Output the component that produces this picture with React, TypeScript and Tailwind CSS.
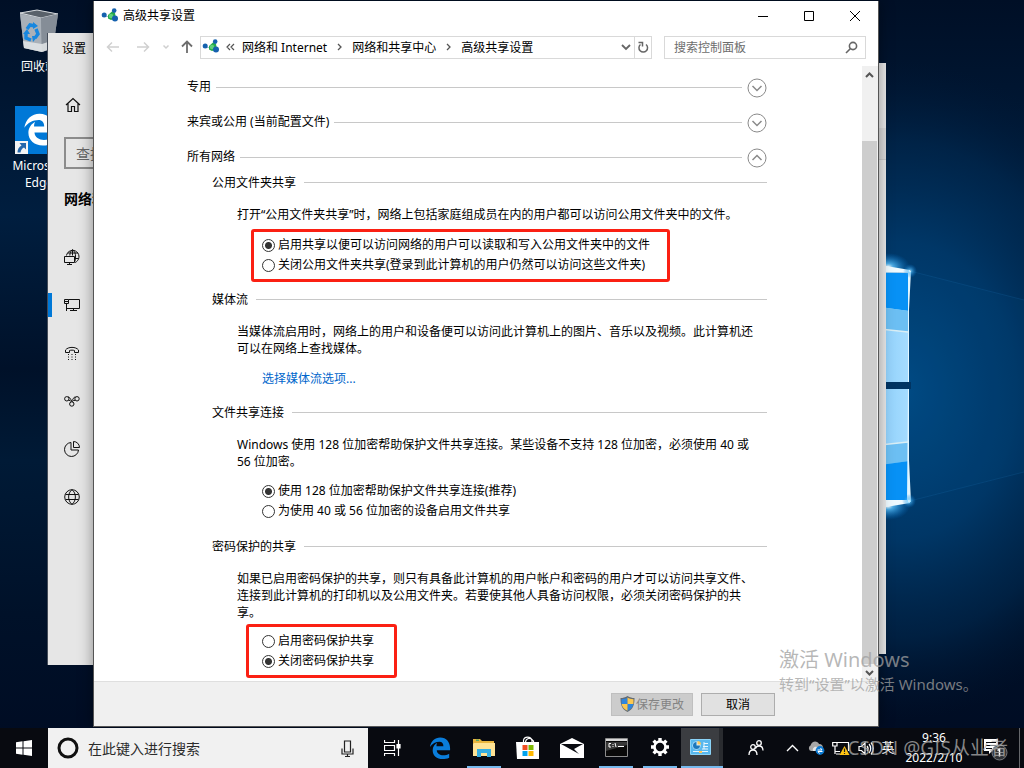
import React from "react";

type KidsProps = { children: React.ReactNode };

function Wallpaper() {
  return (
    <svg className="absolute inset-0 h-full w-full" viewBox="0 0 1024 768" preserveAspectRatio="none" aria-hidden="true">
      <defs>
        <linearGradient id="base" x1="0" y1="0" x2="0" y2="1">
          <stop offset="0" stopColor="#000f26" />
          <stop offset="0.28" stopColor="#001e3f" />
          <stop offset="0.48" stopColor="#001129" />
          <stop offset="0.6" stopColor="#001a36" />
          <stop offset="0.8" stopColor="#001129" />
          <stop offset="1" stopColor="#000b22" />
        </linearGradient>
        <radialGradient id="halo" cx="0.5" cy="0.5" r="0.5">
          <stop offset="0" stopColor="#004a84" />
          <stop offset="0.45" stopColor="#003a6c" stopOpacity="0.9" />
          <stop offset="0.75" stopColor="#002a52" stopOpacity="0.6" />
          <stop offset="1" stopColor="#001836" stopOpacity="0" />
        </radialGradient>
        <radialGradient id="flare" cx="0.5" cy="0.5" r="0.5">
          <stop offset="0" stopColor="#ffffff" />
          <stop offset="0.25" stopColor="#5cc4ff" stopOpacity="0.8" />
          <stop offset="1" stopColor="#0078d7" stopOpacity="0" />
        </radialGradient>
        <linearGradient id="pane" x1="0" y1="0" x2="1" y2="0">
          <stop offset="0" stopColor="#8fd0fb" />
          <stop offset="1" stopColor="#a5dcff" />
        </linearGradient>
      </defs>
      <rect width="1024" height="768" fill="url(#base)" />
      <ellipse cx="900" cy="390" rx="260" ry="330" fill="url(#halo)" />
      <path d="M910 271 1024 300V472L910 501Z" fill="#00508f" opacity="0.12" />
      <path d="M910 271 1024 300M910 501 1024 472" stroke="#1b75b5" strokeWidth="1" opacity="0.2" />
      <ellipse cx="888" cy="267" rx="22" ry="14" fill="url(#flare)" />
      <ellipse cx="888" cy="506" rx="22" ry="14" fill="url(#flare)" />
      <path d="M880 272 909 273V382H880Z" fill="url(#pane)" />
      <path d="M880 273 909 273V311L880 307Z" fill="#0791f5" />
      <path d="M880 307 909 311V332L880 329Z" fill="#6cbff3" />
      <path d="M880 329 908 332" stroke="#d9eef5" strokeWidth="1.500" />
      <path d="M880 389H909V501H880Z" fill="url(#pane)" />
      <path d="M880 445 909 442V461L880 465Z" fill="#6cbff3" />
      <path d="M880 465 909 461V501H880Z" fill="#0791f5" />
      <path d="M880 445 908 442" stroke="#d9eef5" strokeWidth="1.500" />
      <path d="M880 265 910 270V273L880 272Z" fill="#effaff" />
      <path d="M880 500H910V503L880 508Z" fill="#effaff" />
      <path d="M908 271H911L909 310V382H908ZM908 389H909V460L911 502H907Z" fill="#e2f6ff" />
      <path d="M880 382H911V389H880Z" fill="#003462" />
      <circle cx="910" cy="271" r="7" fill="url(#flare)" opacity="0.8" />
      <circle cx="909" cy="501" r="7" fill="url(#flare)" opacity="0.8" />
    </svg>
  );
}

function NetworkGlyph() {
  return (
    <svg width="18" height="16" viewBox="0 0 18 16" className="shrink-0" aria-hidden="true">
      <path d="M3 8 10 9 13 3M10 9 14 12" stroke="#aac3cf" strokeWidth="1" fill="none" />
      <path d="M11.500 3 7 7 7 10.500 10 12 15 10.500 14 5Z" fill="#25a94c" />
      <circle cx="10" cy="8" r="2.200" fill="#5ed07a" />
      <circle cx="3.200" cy="7" r="2.500" fill="#1561ae" />
      <circle cx="13.200" cy="2.600" r="2.300" fill="#1561ae" />
      <circle cx="14" cy="10.500" r="3" fill="#1561ae" />
    </svg>
  );
}

function RecycleBin() {
  return (
    <svg width="48" height="48" viewBox="0 0 48 48" aria-hidden="true">
      <path d="M5 6 22 3 43 7 38 41 27 45 9 41Z" fill="#8b939c" />
      <path d="M5 6 22 3 43 7 26 11Z" fill="#59616a" stroke="#d5d9dd" strokeWidth="1" />
      <path d="M5 7 26 11 27 45 9 41Z" fill="#a9b0b8" />
      <path d="M26 11 43 7 38 41 27 45Z" fill="#858d97" />
      <path d="M8 34 27 37 39 33 38 41 27 45 9 41Z" fill="#e3e6e8" opacity="0.85" />
      <g fill="none" stroke="#1787e0" strokeWidth="3.400">
        <path d="M12 22 15 18 20 19" />
        <path d="M21 22 23 27 20 31" />
        <path d="M16 33 11 31 11 26" />
      </g>
      <path d="M18 15 23 19 18 22ZM23 29 18 35 17 29ZM8 27 12 22 15 27Z" fill="#1787e0" />
    </svg>
  );
}

const edgePath =
  "M1 11C2 4.500 6.500.5 12.200.5 19 .5 23 5.500 23 12.200V14.500H8.500C8.700 18 12 20 15.500 20 18 20 20 19.300 22 18.200V22.500C19.700 23.600 17.300 24 14.800 24 8.500 24 4 20.200 4 14.600 4 10.800 6.200 8 9 6.400 8.300 7.500 8.200 9 8.200 10H15.700C15.700 7 14.200 5.200 11.500 5.200 7.500 5.200 3.500 7.200 1 11Z";

function DesktopIcon({ children, label }: KidsProps & { label: string }) {
  return (
    <button type="button" className="flex w-[76px] flex-col items-center gap-[3px] text-center text-[12px] leading-[17px] text-white">
      {children}
      <span>{label}</span>
    </button>
  );
}

function DesktopIcons() {
  return (
    <nav aria-label="桌面" className="absolute top-[7px] left-px flex flex-col gap-[31px]">
      <DesktopIcon label="回收站">
        <RecycleBin />
      </DesktopIcon>
      <DesktopIcon label="Microsoft Edge">
        <svg width="48" height="48" viewBox="0 0 48 48" aria-hidden="true">
          <rect width="48" height="48" fill="#0078d7" />
          <g transform="translate(8 7) scale(1.35)">
            <path d={edgePath} fill="#fff" />
          </g>
          <rect x="0" y="35" width="13" height="13" fill="#f4f4f4" />
          <path d="M4.500 37H11V43.500L9 41.500C7 42.500 6 44 5.500 46.500H2.500C2.500 43 4 41 6.500 39.500Z" fill="#2467ab" />
        </svg>
      </DesktopIcon>
    </nav>
  );
}

function SettingsIcon({ name }: { name: string }) {
  return (
    <svg width="16" height="16" viewBox="0 0 16 16" fill="none" stroke="#111" strokeWidth="1" aria-hidden="true">
      {name === "状态" && (
        <>
          <path d="M2.500 6.500A6.300 6.300 0 1 1 11 13.500M8.500.7C6.500 2 6 4 5.800 6.500M8.500.7C11 2.500 11.500 5 11.500 7 11.500 9 11.300 10.500 11 12M3.500 4H14M11 9.500H14.500M8.500.7V6.500" />
          <path d="M.5 7.500H10.500V13.500H.5ZM5.500 13.500V15.500M3 15.500H8" />
        </>
      )}
      {name === "以太网" && (
        <path d="M4.500 2.500H15.500V11.500H2.500M9.500 11.500V13.500M6 13.500H13M.5 2.500H4.500V6.500H.5ZM2.500 6.500V14M.5 4.500H4.500" />
      )}
      {name === "拨号" && (
        <>
          <path d="M1.500 7.500V5C4 1.500 12 1.500 14.500 5V7.500H10.500V5.500C9 5 7 5 5.500 5.500V7.500Z" />
          <path d="M4 9.500H5M7.500 9.500H8.500M11 9.500H12M4 12H5M7.500 12H8.500M11 12H12M4 14.500H5M7.500 14.500H8.500M11 14.500H12" />
        </>
      )}
      {name === "VPN" && (
        <>
          <circle cx="2.800" cy="5.800" r="2.200" />
          <circle cx="13" cy="5.800" r="2.200" />
          <circle cx="7.800" cy="11" r="2.200" />
          <path d="M4 4C6 3.500 6.500 7.500 9.500 9.500M11.500 4C9.500 3.500 9 7.500 6.200 9.500M4.500 7.300 6.500 7.600M11.200 7.300 9.200 7.600" />
        </>
      )}
      {name === "数据使用量" && (
        <path d="M7 1.500A7 7 0 1 0 14.500 9H7ZM9.500.5V6.500H15.500A6 6 0 0 0 9.500.5Z" />
      )}
      {name === "代理" && (
        <>
          <circle cx="8" cy="8" r="7.300" />
          <path d="M8 .7C3.500 4 3.500 12 8 15.300M8 .7C12.500 4 12.500 12 8 15.300M1.500 5.500H14.500M1.500 10.500H14.500" />
        </>
      )}
    </svg>
  );
}

const settingsPages = ["状态", "以太网", "拨号", "VPN", "数据使用量", "代理"];

function SettingsWindow() {
  return (
    <section aria-label="设置" className="absolute top-[33px] bottom-[63px] left-[47px] w-[400px] overflow-hidden border-l border-[#444c58] bg-[#e6e6e6]">
      <h2 className="flex h-8 items-center pl-[14px] text-[12px]">设置</h2>
      <button type="button" aria-label="主页" className="mt-4 flex h-12 w-full items-center pl-[17px]">
        <svg width="16" height="16" viewBox="0 0 16 16" fill="none" stroke="#111" strokeWidth="1.200" aria-hidden="true">
          <path d="M1 8 8 1.500 15 8M3 6.500V14.500H6.500V9.500H9.500V14.500H13V6.500" />
        </svg>
      </button>
      <input aria-label="查找设置" placeholder="查找设置" className="mt-2 ml-4 block h-8 w-[300px] border-2 border-[#8c8c8c] bg-transparent px-[10px] text-[14px] placeholder:text-[#666]" />
      <h3 className="mt-5 mb-6 pl-4 text-[14px] leading-5 font-bold">网络和 Internet</h3>
      {settingsPages.map((page) => (
        <button key={page} type="button" className="relative flex h-12 w-full items-center gap-4 pl-4 text-[14px]">
          {page === "以太网" && <i className="absolute left-0 h-6 w-1 bg-[#0078d7]" />}
          <SettingsIcon name={page} />
          <span>{page}</span>
        </button>
      ))}
    </section>
  );
}

function ChevronCircle({ open, label }: { open?: boolean; label: string }) {
  return (
    <button type="button" aria-label={label} aria-expanded={!!open} className="shrink-0">
      <svg width="20" height="20" viewBox="0 0 20 20" fill="none" aria-hidden="true">
        <circle cx="10" cy="10" r="9" stroke="#8a8a8a" />
        <path d={open ? "M5.500 12 10 7.500 14.500 12" : "M5.500 8 10 12.500 14.500 8"} stroke="#8a8a8a" strokeWidth="1.500" />
      </svg>
    </button>
  );
}

function ProfileRow({ title, open }: { title: string; open?: boolean }) {
  return (
    <div className="flex h-[35px] items-center gap-[5px]">
      <h2 className="pb-[3px] leading-[17px]">{title}</h2>
      <span className="h-px flex-1 bg-[#c8c8c8]" />
      <ChevronCircle open={open} label={title} />
    </div>
  );
}

function SectionHead({ children }: KidsProps) {
  return (
    <h3 className="flex h-4 items-center gap-2 pl-[25px]">
      {children}
      <span className="h-px flex-1 bg-[#c8c8c8]" />
    </h3>
  );
}

function Radio({ group, on, children }: KidsProps & { group: string; on?: boolean }) {
  return (
    <label className="flex h-5 items-center gap-[3px]">
      <input
        type="radio"
        name={group}
        defaultChecked={on}
        className="mt-[3px] size-[13px] shrink-0 appearance-none rounded-full border border-[#333] bg-white checked:bg-[radial-gradient(circle,#333_0_3px,#fff_4px)]"
      />
      {children}
    </label>
  );
}

function Crumb({ children }: KidsProps) {
  return (
    <a href="#crumb" className="whitespace-nowrap">
      {children}
    </a>
  );
}

function CrumbArrow() {
  return (
    <svg width="25" height="10" viewBox="0 0 25 10" className="shrink-0" fill="none" stroke="#555" strokeWidth="1.300" aria-hidden="true">
      <path d="M11 2 14 5 11 8" />
    </svg>
  );
}

function TitleBar() {
  return (
    <header className="flex h-[29px] shrink-0 items-center pl-[7px]">
      <NetworkGlyph />
      <h1 className="ml-1 flex-1 text-[12px]">高级共享设置</h1>
      <button type="button" aria-label="最小化" className="flex w-[46px] justify-center">
        <svg width="12" height="12" viewBox="0 0 12 12" stroke="#000" aria-hidden="true">
          <path d="M1 6.500H11" />
        </svg>
      </button>
      <button type="button" aria-label="最大化" className="flex w-[46px] justify-center">
        <svg width="12" height="12" viewBox="0 0 12 12" stroke="#000" fill="none" aria-hidden="true">
          <path d="M1.500 1.500H10.500V10.500H1.500Z" />
        </svg>
      </button>
      <button type="button" aria-label="关闭" className="flex w-[46px] justify-center">
        <svg width="12" height="12" viewBox="0 0 12 12" stroke="#000" aria-hidden="true">
          <path d="M1 1 11 11M11 1 1 11" />
        </svg>
      </button>
    </header>
  );
}

function NavBar() {
  return (
    <div className="flex h-9 shrink-0 items-center pr-3 pb-[2px] pl-3">
      <button type="button" aria-label="后退">
        <svg width="14" height="12" viewBox="0 0 14 12" fill="none" stroke="#d0d0d0" strokeWidth="1.500" aria-hidden="true">
          <path d="M13 6H1.500M6 1.500 1.500 6 6 10.500" />
        </svg>
      </button>
      <button type="button" aria-label="前进" className="ml-4">
        <svg width="14" height="12" viewBox="0 0 14 12" fill="none" stroke="#d0d0d0" strokeWidth="1.500" aria-hidden="true">
          <path d="M1 6H12.500M8 1.500 12.500 6 8 10.500" />
        </svg>
      </button>
      <button type="button" aria-label="最近" className="ml-3">
        <svg width="8" height="8" viewBox="0 0 8 8" fill="none" stroke="#cfcfcf" strokeWidth="1.500" aria-hidden="true">
          <path d="M1.500 2.500 4 5 6.500 2.500" />
        </svg>
      </button>
      <button type="button" aria-label="向上" className="ml-[10px]">
        <svg width="14" height="14" viewBox="0 0 14 14" fill="none" stroke="#6d6d6d" strokeWidth="1.800" aria-hidden="true">
          <path d="M7 13V2M2 6.500 7 1.500 12 6.500" />
        </svg>
      </button>
      <div className="ml-[6px] flex h-[23px] flex-1 items-center border border-[#d9d9d9] pl-px">
        <NetworkGlyph />
        <svg width="22" height="10" viewBox="0 0 22 10" fill="none" stroke="#555" strokeWidth="1.200" aria-hidden="true">
          <path d="M10 2 7 5 10 8M14 2 11 5 14 8" />
        </svg>
        <Crumb>网络和 Internet</Crumb>
        <CrumbArrow />
        <Crumb>网络和共享中心</Crumb>
        <CrumbArrow />
        <Crumb>高级共享设置</Crumb>
        <button type="button" aria-label="历史记录" className="mr-[3px] ml-auto">
          <svg width="10" height="10" viewBox="0 0 10 10" fill="none" stroke="#666" strokeWidth="1.800" aria-hidden="true">
            <path d="M1 3 5 7 9 3" />
          </svg>
        </button>
        <button type="button" aria-label="刷新" className="flex h-full w-[17px] items-center justify-center border-l border-[#d9d9d9]">
          <svg width="12" height="13" viewBox="0 0 12 13" fill="none" stroke="#666" strokeWidth="1.500" aria-hidden="true">
            <path d="M9 3.500A4.300 4.300 0 1 1 3.500 3.500M1.500 1.500H5.500V5.500" />
          </svg>
        </button>
      </div>
      <label className="ml-3 flex h-[23px] w-[202px] items-center border border-[#d9d9d9] pr-[7px] pl-[9px]">
        <input aria-label="搜索控制面板" placeholder="搜索控制面板" className="min-w-0 flex-1 text-[12px] outline-none placeholder:text-[#6d6d6d]" />
        <svg width="13" height="13" viewBox="0 0 13 13" fill="none" stroke="#666" strokeWidth="1.600" aria-hidden="true">
          <circle cx="8" cy="5" r="3.600" />
          <path d="M5.500 7.500 1 12" />
        </svg>
      </label>
    </div>
  );
}

function ScrollBar() {
  return (
    <div className="flex w-4 shrink-0 flex-col bg-[#f0f0f0]">
      <svg width="15" height="18" viewBox="0 0 15 18" fill="none" stroke="#555" strokeWidth="2" aria-hidden="true">
        <path d="M4 11 7.500 7.500 11 11" />
      </svg>
      <div className="mt-[57px] mr-px flex-1 bg-[#cdcdcd]" />
      <svg width="15" height="17" viewBox="0 0 15 17" fill="none" stroke="#555" strokeWidth="2" aria-hidden="true">
        <path d="M4 7 7.500 10.500 11 7" />
      </svg>
    </div>
  );
}

function SharingWindow() {
  return (
    <main className="absolute top-px right-[145px] bottom-px left-[93px] flex flex-col border border-t-0 border-[#555] bg-white text-[12px] leading-[17px] text-black shadow-[0_0_14px_rgba(0,0,0,0.4)]">
      <TitleBar />
      <NavBar />
      <div className="flex min-h-0 flex-1">
        <form id="sharing" className="min-w-0 flex-1 overflow-hidden pt-1 pr-[95px] pl-[93px]">
          <ProfileRow title="专用" />
          <ProfileRow title="来宾或公用 (当前配置文件)" />
          <ProfileRow title="所有网络" open />

          <div className="-mt-px">
            <SectionHead>公用文件夹共享</SectionHead>
            <p className="mt-4 pl-[50px]">打开“公用文件夹共享”时，网络上包括家庭组成员在内的用户都可以访问公用文件夹中的文件。</p>
            <div className="mt-[6px] ml-16 w-fit rounded-[3px] border-3 border-[#fb2013] pt-[2px] pr-[17px] pb-[5px] pl-2">
              <Radio group="public" on>启用共享以便可以访问网络的用户可以读取和写入公用文件夹中的文件</Radio>
              <Radio group="public">关闭公用文件夹共享(登录到此计算机的用户仍然可以访问这些文件夹)</Radio>
            </div>
          </div>

          <div className="mt-[9px]">
            <SectionHead>媒体流</SectionHead>
            <p className="mt-4 pr-3 pl-[50px]">
              当媒体流启用时，网络上的用户和设备便可以访问此计算机上的图片、音乐以及视频。此计算机还可以在网络上查找媒体。
            </p>
            <a href="#media" className="mt-[13px] ml-[75px] block w-fit text-[#0066cc]">选择媒体流选项...</a>
          </div>

          <div className="mt-[17px]">
            <SectionHead>文件共享连接</SectionHead>
            <p className="mt-4 pr-3 pl-[50px]">
              Windows 使用 128 位加密帮助保护文件共享连接。某些设备不支持 128 位加密，必须使用 40 或 56 位加密。
            </p>
            <div className="mt-[10px] ml-[75px]">
              <Radio group="crypt" on>使用 128 位加密帮助保护文件共享连接(推荐)</Radio>
              <Radio group="crypt">为使用 40 或 56 位加密的设备启用文件共享</Radio>
            </div>
          </div>

          <div className="mt-[18px]">
            <SectionHead>密码保护的共享</SectionHead>
            <p className="mt-4 pr-3 pl-[50px]">
              如果已启用密码保护的共享，则只有具备此计算机的用户帐户和密码的用户才可以访问共享文件、连接到此计算机的打印机以及公用文件夹。若要使其他人具备访问权限，必须关闭密码保护的共享。
            </p>
            <div className="mt-[3px] ml-[59px] w-fit rounded-[3px] border-3 border-[#fb2013] pt-[3px] pr-5 pb-[5px] pl-[13px]">
              <Radio group="password">启用密码保护共享</Radio>
              <Radio group="password" on>关闭密码保护共享</Radio>
            </div>
          </div>
        </form>
        <ScrollBar />
      </div>
      <footer className="flex h-[45px] shrink-0 items-center justify-end gap-2 border-t border-[#dfdfdf] bg-[#f0f0f0] pr-[103px]">
        <button type="submit" form="sharing" disabled className="flex h-[23px] w-[82px] items-center justify-center gap-px border border-[#bfbfbf] bg-[#cccccc] text-[#838383]">
          <svg width="15" height="16" viewBox="0 0 15 16" aria-hidden="true">
            <path d="M7.500 0C5 1.500 3 2 .5 2 .5 8.500 1.500 13 7.500 16 13.500 13 14.500 8.500 14.500 2 12 2 10 1.500 7.500 0Z" fill="#646b73" />
            <path d="M7.500 1.500V8H1.600C1.500 6 1.500 5 1.500 3.200 4 3 6 2.500 7.500 1.500ZM7.500 8H13.400C12.800 11 11 13.200 7.500 14.800Z" fill="#2f86dd" />
            <path d="M7.500 1.500V8H13.400C13.500 6 13.500 5 13.500 3.200 11 3 9 2.500 7.500 1.500ZM7.500 8H1.600C2.200 11 4 13.200 7.500 14.800Z" fill="#fbc850" />
          </svg>
          保存更改
        </button>
        <button type="button" className="h-[23px] w-[74px] border border-[#adadad] bg-[#e1e1e1]">取消</button>
      </footer>
    </main>
  );
}

function TaskButton({ label, running, children }: KidsProps & { label: string; running?: boolean }) {
  return (
    <button
      type="button"
      aria-label={label}
      className={running ? "flex h-full w-[34px] items-center justify-center border-b-2 border-[#76b9ed]" : "flex h-full w-[34px] items-center justify-center"}
    >
      {children}
    </button>
  );
}

function TaskApps() {
  return (
    <div className="flex h-full shrink-0">
      <button type="button" aria-label="任务视图" className="flex h-full w-12 items-center justify-center">
        <svg width="17" height="16" viewBox="0 0 17 16" fill="none" stroke="#fff" strokeWidth="1.200" aria-hidden="true">
          <path d="M.5 0V2.500H10.500V0M.5 5.500H10.500V10.500H.5ZM.5 16V13.500H10.500V16M14.500 0V16" />
          <path d="M13 4.500H16V8H13Z" fill="#fff" />
        </svg>
      </button>
      <div className="ml-[7px] flex gap-[10px]">
        <TaskButton label="Microsoft Edge">
          <svg width="22" height="22" viewBox="0 0 24 24" aria-hidden="true">
            <path d={edgePath} fill="#0a7ddb" />
          </svg>
        </TaskButton>
        <TaskButton label="文件资源管理器" running>
          <svg width="22" height="19" viewBox="0 0 22 19" aria-hidden="true">
            <path d="M0 1H7L9 3H21V18H0Z" fill="#e8b53e" />
            <path d="M1 5H22V18H0V6Z" fill="#ffe394" />
            <path d="M4 19V11H18V19H14V15H8V19Z" fill="#35aee2" />
            <path d="M3 1.500H6V3H3Z" fill="#5aa85f" />
          </svg>
        </TaskButton>
        <TaskButton label="Microsoft Store">
          <svg width="24" height="24" viewBox="0 0 24 24" aria-hidden="true">
            <path d="M7.500 8V4.500C8 0 15 0 16 4.500V8M9.500 6C10 2 14.500 1 17.500 5V8" fill="none" stroke="#fff" strokeWidth="1.200" />
            <path d="M0 6H23V23H1Z" fill="#fff" />
            <path d="M6.500 9H11.500V14H6.500Z" fill="#f04e23" />
            <path d="M12.500 9H17.500V14H12.500Z" fill="#7db902" />
            <path d="M6.500 15H11.500V20H6.500Z" fill="#00a3ee" />
            <path d="M12.500 15H17.500V20H12.500Z" fill="#ffb800" />
          </svg>
        </TaskButton>
        <TaskButton label="邮件">
          <svg width="24" height="20" viewBox="0 0 24 20" aria-hidden="true">
            <path d="M0 6 12 0 24 6V20H0Z" fill="#fff" />
            <path d="M1 6H23L14 11 19 16 10 11Z" fill="#080a10" />
          </svg>
        </TaskButton>
        <TaskButton label="命令提示符" running>
          <svg width="23" height="19" viewBox="0 0 23 19" aria-hidden="true">
            <path d="M.5.5H22.500V18.500H.5Z" fill="#090909" stroke="#8c8c8c" />
            <path d="M1 1H22V3H1Z" fill="#d8d8d8" />
            <path d="M1 4H22V7L1 13Z" fill="#383838" />
            <path d="M6 5.500H4V9H6M8 6V7M8 8V9M10 5 11 9M13 8.500H19" fill="none" stroke="#fff" />
          </svg>
        </TaskButton>
        <TaskButton label="设置" running>
          <svg width="20" height="20" viewBox="0 0 20 20" fill="none" stroke="#fff" aria-hidden="true">
            <circle cx="10" cy="10" r="5.500" strokeWidth="2.600" />
            <path d="M10 1V4M10 16V19M1 10H4M16 10H19M3.600 3.600 5.700 5.700M14.300 14.300 16.400 16.400M16.400 3.600 14.300 5.700M3.600 16.400 5.700 14.300" strokeWidth="3.400" />
          </svg>
        </TaskButton>
      </div>
      <button type="button" aria-label="控制面板" className="ml-1 flex h-full w-[42px] items-center border-b-2 border-[#76b9ed] bg-[#3b3d41] pl-[9px] shadow-[inset_-4px_0_0_#292b2f]">
        <svg width="21" height="16" viewBox="0 0 21 16" aria-hidden="true">
          <rect width="21" height="16" rx="1" fill="#8bd3f7" />
          <rect x="1" y="1" width="19" height="14" fill="#58b8ee" />
          <circle cx="6.500" cy="6.500" r="4" fill="#d8f1ff" />
          <path d="M6.500 6.500V3A3.500 3.500 0 1 0 10 6.500Z" fill="#1d78bc" />
          <path d="M7.500 5.500V2A3.500 3.500 0 0 1 11 5.500Z" fill="#ffc75a" />
          <path d="M14 4.500H18M13 7.500H18M14 3V10M12 10H18M3 12.500H18" stroke="#e6f6ff" />
          <path d="M9 12H12V14H9Z" fill="#ffc75a" />
        </svg>
      </button>
    </div>
  );
}

function Tray() {
  return (
    <div className="ml-auto flex h-full shrink-0 items-center text-[12px] text-white">
      <button type="button" aria-label="人脉" className="flex w-12 justify-center">
        <svg width="16" height="16" viewBox="0 0 16 16" fill="none" stroke="#fff" strokeWidth="1.300" aria-hidden="true">
          <circle cx="5" cy="7" r="2.300" />
          <path d="M1 15C1 11 3 10 5 10S9 11 9 15" />
          <circle cx="11" cy="3" r="2.300" />
          <path d="M7.500 8.500C8 6.500 9.500 6 11 6 13.500 6 15 7.500 15 10.500" />
        </svg>
      </button>
      <button type="button" aria-label="显示隐藏的图标" className="flex w-6 justify-center">
        <svg width="13" height="8" viewBox="0 0 13 8" fill="none" stroke="#fff" strokeWidth="1.400" aria-hidden="true">
          <path d="M1 7 6.500 1.500 12 7" />
        </svg>
      </button>
      <button type="button" aria-label="OneDrive" className="flex w-6 justify-center">
        <svg width="17" height="14" viewBox="0 0 17 14" aria-hidden="true">
          <path d="M3 10A3 3 0 0 1 2.500 4.500C4-1 10 0 11 3 14 3 15 5 15 7V10Z" fill="#a7a7a7" />
          <path d="M5 10C4 7 7 5 9 6L14 7V10Z" fill="#e7e7e7" />
          <circle cx="12" cy="9.500" r="4.400" fill="#0a78cf" />
          <path d="M9.500 9H14L12.500 7M14.500 10.500H10L11.500 12.500" fill="none" stroke="#fff" />
        </svg>
      </button>
      <button type="button" aria-label="网络" className="flex w-[26px] justify-center">
        <svg width="18" height="16" viewBox="0 0 18 16" fill="none" stroke="#fff" strokeWidth="1.200" aria-hidden="true">
          <path d="M5 2.500H16.500V11M3 11.500H8M3 6V14M.7 2.500H5V6H.7ZM4 14H8" />
          <path d="M12.500 6 17.500 15H7.500Z" fill="#ffc414" stroke="none" />
          <path d="M12.500 8.500V12M12.500 13V14" stroke="#222" />
        </svg>
      </button>
      <button type="button" aria-label="音量" className="flex w-6 justify-center">
        <svg width="16" height="15" viewBox="0 0 16 15" fill="none" stroke="#fff" strokeWidth="1.200" aria-hidden="true">
          <path d="M1 5.500H3.500L7 2V13L3.500 9.500H1ZM9 5C10.300 6.500 10.300 8.500 9 10M11 3C13.200 5.500 13.200 9.500 11 12M13 1.500C16 5 16 10 13 13.500" />
        </svg>
      </button>
      <button type="button" className="w-5 text-[13px]">英</button>
      <button type="button" className="w-[72px] text-center leading-5">
        <time dateTime="09:36" className="block">9:36</time>
        <time dateTime="2022-02-10" className="block">2022/2/10</time>
      </button>
      <button type="button" aria-label="通知" className="flex w-[49px] justify-center">
        <svg width="26" height="26" viewBox="0 0 26 26" aria-hidden="true">
          <path d="M2 4H16V16H10L7 19V16H2Z" fill="#fff" />
          <path d="M4 7.500H14M4 10.500H14M4 13.500H10" stroke="#080a10" />
          <circle cx="17.500" cy="17.500" r="7.500" fill="#303236" stroke="#77797c" />
          <path d="M15.500 15.500 17.500 14V21.500" fill="none" stroke="#fff" strokeWidth="1.500" />
        </svg>
      </button>
      <button type="button" aria-label="显示桌面" className="h-full w-[5px] border-l border-[#66686b]" />
    </div>
  );
}

function TaskBar() {
  return (
    <footer className="flex h-10 shrink-0 items-center bg-[#080a10]">
      <button type="button" aria-label="开始" className="flex w-12 shrink-0 justify-center">
        <svg width="16" height="16" viewBox="0 0 16 16" fill="#fff" aria-hidden="true">
          <path d="M0 2.300 6.500 1.300V7.500H0ZM7.500 1.200 16 0V7.500H7.500ZM0 8.500H6.500V14.700L0 13.700ZM7.500 8.500H16V16L7.500 14.800Z" />
        </svg>
      </button>
      <label className="flex h-full w-80 min-w-0 items-center bg-[#f1f1f1] pr-[14px] pl-[9px]">
        <svg width="22" height="22" viewBox="0 0 22 22" fill="none" className="shrink-0" aria-hidden="true">
          <circle cx="11" cy="11" r="9" stroke="#101010" strokeWidth="3" />
        </svg>
        <input aria-label="在此键入进行搜索" placeholder="在此键入进行搜索" className="ml-[9px] min-w-0 flex-1 text-[14px] outline-none placeholder:text-[#2b2b2b]" />
        <svg width="13" height="17" viewBox="0 0 13 17" fill="none" stroke="#222" strokeWidth="1.200" aria-hidden="true">
          <path d="M3.500 1H9.500V12H3.500ZM1 8.500V14H12V8.500M6.500 14V16.500M4 16.500H9" />
        </svg>
      </label>
      <TaskApps />
      <Tray />
    </footer>
  );
}

export default function App() {
  return (
    <div className="relative flex h-screen flex-col overflow-hidden bg-[#00102a] font-['Noto_Sans','Noto_Sans_CJK_SC',sans-serif]">
      <Wallpaper />
      <div className="relative min-h-0 flex-1">
        <DesktopIcons />
        <SettingsWindow />
        <section aria-label="控制面板" className="absolute top-[63px] right-[138px] bottom-[74px] w-[300px] bg-[#ececec] pt-[65px]">
          <div className="h-8 border-b border-[#cfcfcf] bg-[#dfdfdf]" />
        </section>
        <SharingWindow />
      </div>
      <div className="relative">
        <TaskBar />
      </div>
      <aside className="pointer-events-none absolute right-[43px] bottom-[72px] w-[202px] whitespace-nowrap text-[rgba(160,160,160,0.75)]">
        <p className="text-[20px] leading-6">激活 Windows</p>
        <p className="text-[15px] leading-6">转到“设置”以激活 Windows。</p>
      </aside>
      <span className="pointer-events-none absolute right-4 bottom-1 text-[19px] leading-8 whitespace-nowrap text-[rgba(175,175,175,0.75)]">
        CSDN @GIS从业者
      </span>
    </div>
  );
}
